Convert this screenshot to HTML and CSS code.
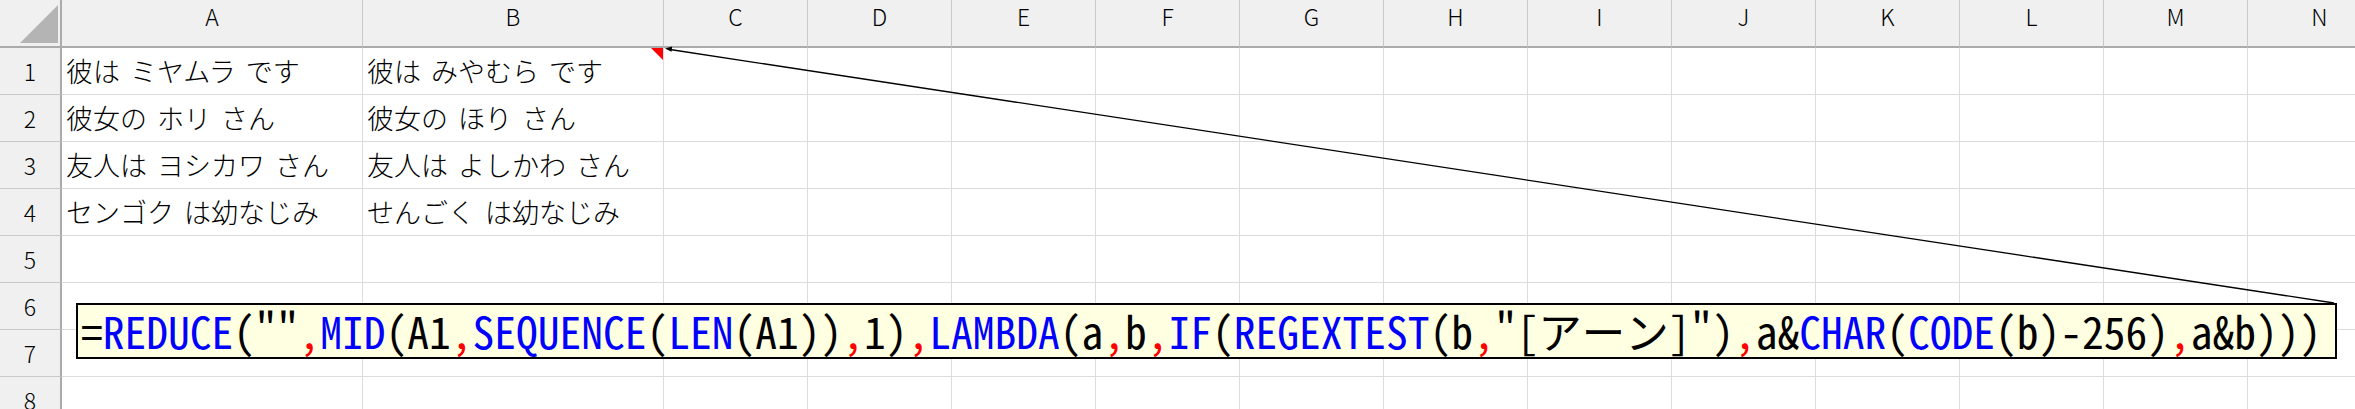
FILE: index.html
```html
<!DOCTYPE html>
<html lang="ja">
<head>
  <meta charset="UTF-8" />
  <title>Sheet1</title>
  <link rel="stylesheet" href="styles.css">
</head>
<body>
  <div class="sheet">
    <div class="grid">
      <!-- column headers -->
      <div class="corner"></div>
      <div class="col-head">A</div><div class="col-head">B</div><div class="col-head">C</div><div class="col-head">D</div><div class="col-head">E</div><div class="col-head">F</div><div class="col-head">G</div><div class="col-head">H</div><div class="col-head">I</div><div class="col-head">J</div><div class="col-head">K</div><div class="col-head">L</div><div class="col-head">M</div><div class="col-head">N</div>

      <div class="row-head">1</div>
      <div class="cell">彼は ミヤムラ です</div><div class="cell note">彼は みやむら です</div>
      <div class="cell"></div><div class="cell"></div><div class="cell"></div><div class="cell"></div><div class="cell"></div><div class="cell"></div><div class="cell"></div><div class="cell"></div><div class="cell"></div><div class="cell"></div><div class="cell"></div><div class="cell"></div>

      <div class="row-head">2</div>
      <div class="cell">彼女の ホリ さん</div><div class="cell">彼女の ほり さん</div>
      <div class="cell"></div><div class="cell"></div><div class="cell"></div><div class="cell"></div><div class="cell"></div><div class="cell"></div><div class="cell"></div><div class="cell"></div><div class="cell"></div><div class="cell"></div><div class="cell"></div><div class="cell"></div>

      <div class="row-head">3</div>
      <div class="cell">友人は ヨシカワ さん</div><div class="cell">友人は よしかわ さん</div>
      <div class="cell"></div><div class="cell"></div><div class="cell"></div><div class="cell"></div><div class="cell"></div><div class="cell"></div><div class="cell"></div><div class="cell"></div><div class="cell"></div><div class="cell"></div><div class="cell"></div><div class="cell"></div>

      <div class="row-head">4</div>
      <div class="cell">センゴク は幼なじみ</div><div class="cell">せんごく は幼なじみ</div>
      <div class="cell"></div><div class="cell"></div><div class="cell"></div><div class="cell"></div><div class="cell"></div><div class="cell"></div><div class="cell"></div><div class="cell"></div><div class="cell"></div><div class="cell"></div><div class="cell"></div><div class="cell"></div>

      <div class="row-head">5</div>
      <div class="cell"></div><div class="cell"></div><div class="cell"></div><div class="cell"></div><div class="cell"></div><div class="cell"></div><div class="cell"></div><div class="cell"></div><div class="cell"></div><div class="cell"></div><div class="cell"></div><div class="cell"></div><div class="cell"></div><div class="cell"></div>

      <div class="row-head">6</div>
      <div class="cell"></div><div class="cell"></div><div class="cell"></div><div class="cell"></div><div class="cell"></div><div class="cell"></div><div class="cell"></div><div class="cell"></div><div class="cell"></div><div class="cell"></div><div class="cell"></div><div class="cell"></div><div class="cell"></div><div class="cell"></div>

      <div class="row-head">7</div>
      <div class="cell"></div><div class="cell"></div><div class="cell"></div><div class="cell"></div><div class="cell"></div><div class="cell"></div><div class="cell"></div><div class="cell"></div><div class="cell"></div><div class="cell"></div><div class="cell"></div><div class="cell"></div><div class="cell"></div><div class="cell"></div>

      <div class="row-head">8</div>
      <div class="cell"></div><div class="cell"></div><div class="cell"></div><div class="cell"></div><div class="cell"></div><div class="cell"></div><div class="cell"></div><div class="cell"></div><div class="cell"></div><div class="cell"></div><div class="cell"></div><div class="cell"></div><div class="cell"></div><div class="cell"></div>
    </div>

    <!-- comment connector -->
    <svg class="connector" viewBox="0 0 2355 409">
      <line x1="670" y1="49.5" x2="2334" y2="303" stroke="#000" stroke-width="1.3"/>
      <polygon points="665,48.5 671.5,51.8 672.2,46.6" fill="#000"/>
    </svg>

    <!-- comment box -->
    <div class="comment">=<span class="fn">REDUCE</span>(""<span class="sep">,</span><span class="fn">MID</span>(A1<span class="sep">,</span><span class="fn">SEQUENCE</span>(<span class="fn">LEN</span>(A1))<span class="sep">,</span>1)<span class="sep">,</span><span class="fn">LAMBDA</span>(a<span class="sep">,</span>b<span class="sep">,</span><span class="fn">IF</span>(<span class="fn">REGEXTEST</span>(b<span class="sep">,</span>"[アーン]")<span class="sep">,</span>a&amp;<span class="fn">CHAR</span>(<span class="fn">CODE</span>(b)-256)<span class="sep">,</span>a&amp;b)))</div>
  </div>
</body>
</html>
```

FILE: styles.css
```css
/* Reset */
* { margin: 0; padding: 0; box-sizing: border-box; }
body {
  background: #fff;
  color: #000;
  font-family: "Noto Sans CJK JP", "Noto Sans", sans-serif;
  overflow: hidden;
}

.sheet {
  position: relative;
  width: 2355px;
  height: 409px;
  overflow: hidden;
}

/* Grid */
.grid {
  display: grid;
  grid-template-columns: 62px 301px 301px repeat(12, 144px);
  grid-template-rows: 48px repeat(8, 47px);
}

.corner {
  position: relative;
  background: #f0f0f0;
  border-right: 2px solid #ababab;
  border-bottom: 2px solid #ababab;
}
.corner::after {
  content: "";
  position: absolute;
  right: 2px;
  bottom: 3px;
  width: 0;
  height: 0;
  border-left: 38px solid transparent;
  border-bottom: 38px solid #b4b4b4;
}

.col-head {
  background: #f0f0f0;
  border-right: 1px solid #c8c8c8;
  border-bottom: 2px solid #ababab;
  font-size: 23px;
  font-weight: 300;
  line-height: 32px;
  text-align: center;
}

.row-head {
  background: #f0f0f0;
  border-right: 2px solid #ababab;
  border-bottom: 1px solid #c8c8c8;
  font-size: 23px;
  font-weight: 300;
  line-height: 47px;
  text-align: center;
}

.cell {
  position: relative;
  border-right: 1px solid #dcdcdc;
  border-bottom: 1px solid #dcdcdc;
  padding-left: 4px;
  font-size: 27px;
  font-weight: 300;
  line-height: 46px;
  word-spacing: 4px;
  white-space: nowrap;
}

/* red comment indicator */
.cell.note::after {
  content: "";
  position: absolute;
  top: 0;
  right: 0;
  width: 0;
  height: 0;
  border-top: 12px solid #f00;
  border-left: 12px solid transparent;
}

/* Comment */
.connector {
  position: absolute;
  top: 0;
  left: 0;
  width: 2355px;
  height: 409px;
  pointer-events: none;
}

.comment {
  position: absolute;
  top: 303px;
  left: 76px;
  width: 2261px;
  height: 56px;
  background: #ffffe1;
  border: 2px solid #000;
  padding-left: 3px;
  font-family: "Noto Sans Mono CJK JP", "DejaVu Sans Mono", monospace;
  font-size: 43.5px;
  line-height: 52px;
  white-space: nowrap;
  overflow: hidden;
}
.fn { color: #0000ff; }
.sep { color: #ff0000; }
```
